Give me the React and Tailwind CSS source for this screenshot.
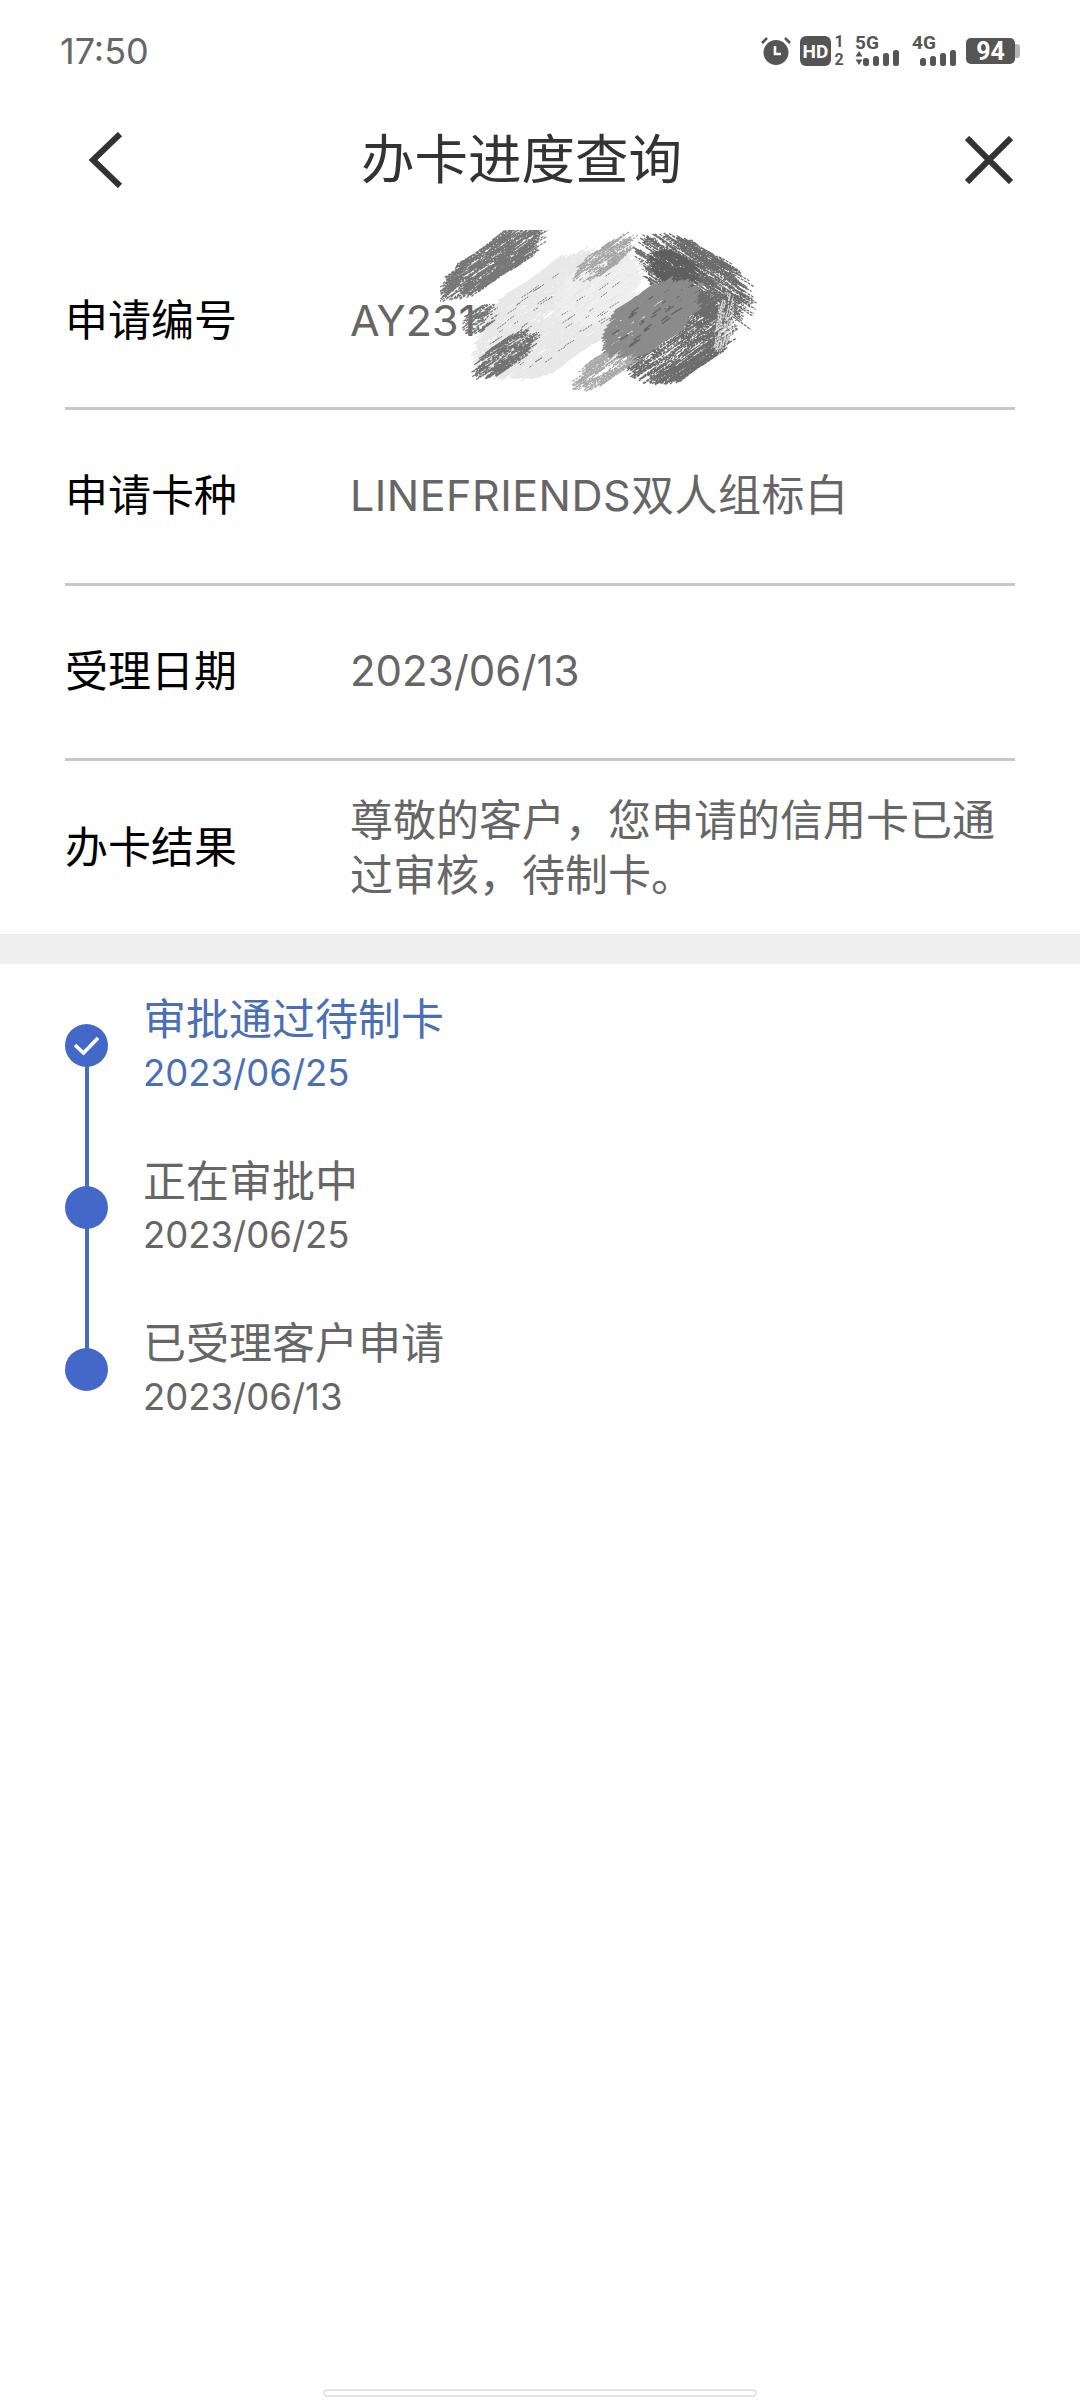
const cjk = "font-['Inter','Noto_Sans_CJK_SC',sans-serif]"

const rows = [
  { label: '申请编号', value: 'AY231', size: 'text-[43px]' },
  { label: '申请卡种', value: 'LINEFRIENDS双人组标白', size: 'text-[43px] tracking-[0.5px]' },
  { label: '受理日期', value: '2023/06/13', size: 'text-[42px]' },
]

const steps = [
  { title: '审批通过待制卡', date: '2023/06/25', active: true },
  { title: '正在审批中', date: '2023/06/25' },
  { title: '已受理客户申请', date: '2023/06/13' },
]

// seeded so the scribble comes out the same on every load
function scribblePaths(seed, patches) {
  let s = seed
  const rnd = () => {
    s = (s * 16807) % 2147483647
    return s / 2147483647
  }
  return patches.map(([cx, cy, len, wide, angle, count, color, width, maxLen, dash], idx) => {
    let d = ''
    for (let i = 0; i < count; i++) {
      const a = (rnd() - 0.5) * 2 * wide
      const b = (rnd() - 0.5) * 2 * len * (1 - ((a * a) / (wide * wide)) * 0.6)
      const t = angle + (rnd() - 0.5) * 0.14
      const dx = Math.cos(t)
      const dy = -Math.sin(t)
      const l = 3 + rnd() * maxLen
      const x = cx + a * -dy + b * dx
      const y = cy + a * dx + b * dy
      d += `M${x.toFixed(1)} ${y.toFixed(1)}L${(x + l * dx).toFixed(1)} ${(y + l * dy).toFixed(1)}`
    }
    return <path key={idx} d={d} fill="none" stroke={color} strokeWidth={width} strokeDasharray={dash} />
  })
}

const UP = 0.6
const DOWN = -0.56

const scribble = scribblePaths(4711, [
  // right dark mass first, the mid grey goes over it
  [248, 44, 62, 30, DOWN, 800, '#6c6c6c', 1.2, 22, '3 1'],
  [232, 38, 26, 15, DOWN, 320, '#5e5e5e', 1.5, 12, '4 1'],
  [236, 112, 58, 34, UP, 1100, '#6d6d6d', 1.2, 20, '3 1'],
  [284, 95, 32, 8, 1.4, 120, '#dddddd', 1, 6, '2 1'],
  // light centre
  [112, 88, 92, 44, UP, 3800, '#e8e8e8', 1.3, 14, '5 1'],
  [155, 62, 48, 28, UP, 700, '#efefef', 1.3, 10, '5 1'],
  [112, 88, 80, 34, UP, 60, '#7a7a7a', 1, 9, '2 1'],
  // left dark band and the lower left leftovers
  [46, 36, 60, 17, UP, 760, '#777777', 1.2, 18, '3 1'],
  [36, 92, 18, 11, UP, 110, '#777777', 1.2, 10, '3 1'],
  [60, 128, 36, 13, UP, 280, '#737373', 1.2, 14, '3 1'],
  // mid greys
  [160, 32, 34, 11, UP, 180, '#a6a6a6', 1.2, 14, '3 1'],
  [166, 136, 42, 13, UP, 280, '#a9a9a9', 1.2, 14, '3 1'],
  [206, 92, 54, 26, UP, 1300, '#8b8b8b', 1.6, 14],
  [206, 92, 40, 18, UP, 24, '#666666', 1.4, 8],
])

function Scribble() {
  return (
    <svg className="absolute left-[440px] top-[230px] h-[165px] w-[340px]" viewBox="0 0 340 165">
      {scribble}
    </svg>
  )
}

function Bars() {
  return (
    <svg width="36" height="16" viewBox="0 0 36 16" fill="#555555">
      <rect x="0" y="8" width="6" height="8" rx="2.5" />
      <rect x="10" y="6" width="6" height="10" rx="2.5" />
      <rect x="20" y="3" width="6" height="13" rx="2.5" />
      <rect x="30" y="0" width="6" height="16" rx="2.5" />
    </svg>
  )
}

function StatusIcons() {
  return (
    <div className="flex items-center font-['Roboto',sans-serif] font-bold text-[#555555]">
      <svg width="30" height="30" viewBox="0 0 30 30" className="mr-[9px]">
        <circle cx="15" cy="16.5" r="12.5" fill="#555555" />
        <path d="M14 10v8h6" fill="none" stroke="#fff" strokeWidth="2.6" />
        <path d="M1 7l5-5M29 7l-5-5" stroke="#555555" strokeWidth="2.6" />
      </svg>
      <div className="flex h-[30px] w-[31px] items-center justify-center rounded-[6px] bg-[#555555] text-[19px] leading-none text-white">
        HD
      </div>
      <div className="ml-[2px] flex w-[12px] flex-col items-center text-[16px] leading-[18.5px]">
        <span>1</span>
        <span>2</span>
      </div>
      <div className="ml-[10px] flex w-[44px] flex-col">
        <span className="text-[19px] leading-[14px]">5G</span>
        <div className="flex items-end justify-between">
          <svg width="8" height="16" viewBox="0 0 8 16" fill="#555555">
            <path d="M4 1l3.5 5.5h-7zM4 15L.5 9.5h7z" />
          </svg>
          <Bars />
        </div>
      </div>
      <div className="ml-[13px] flex w-[44px] flex-col">
        <span className="text-[19px] leading-[14px]">4G</span>
        <div className="flex justify-end">
          <Bars />
        </div>
      </div>
      <div className="ml-[10px] flex items-center">
        <div className="flex h-[26px] w-[49px] items-center justify-center rounded-[5px] bg-[#555555] text-[25px] leading-none text-white">
          94
        </div>
        <div className="h-[14px] w-[5px] rounded-r-[3px] bg-[#b5b5b5]" />
      </div>
    </div>
  )
}

export default function App() {
  return (
    <div className={`relative flex h-[2400px] w-[1080px] flex-col overflow-hidden bg-white ${cjk}`}>
      <div className="flex h-[100px] items-center justify-between px-[60px] pt-[2px]">
        <span className="text-[36px] text-[#666666]">17:50</span>
        <StatusIcons />
      </div>

      <div className="flex h-[120px] items-center justify-between pl-[88px] pr-[67px]">
        <svg width="36" height="56" viewBox="0 0 36 56" fill="none" stroke="#333333" strokeWidth="6">
          <path d="M32 2L5 28l27 26" />
        </svg>
        <h1 className="mr-[46px] text-[53.5px] font-normal leading-none text-[#333333]">办卡进度查询</h1>
        <svg width="48" height="48" viewBox="0 0 48 48" fill="none" stroke="#333333" strokeWidth="6">
          <path d="M2 2l44 44M46 2L2 46" />
        </svg>
      </div>

      <div className="mx-[65px] mt-[14.5px]">
        {rows.map((row) => (
          <div key={row.label} className="flex h-[175.5px] items-center border-b-[3px] border-[#c8c8c8] pb-[2px]">
            <span className="w-[285px] text-[43px] text-black">{row.label}</span>
            <span className={`${row.size} text-[#666666]`}>{row.value}</span>
          </div>
        ))}
        <div className="flex h-[173px] items-center">
          <span className="w-[285px] shrink-0 text-[43px] text-black">办卡结果</span>
          <span className="text-[43px] leading-[55px] text-[#666666]">尊敬的客户，您申请的信用卡已通过审核，待制卡。</span>
        </div>
      </div>

      <div className="h-[30px] bg-[#eeeeee]" />

      <div className="pl-[65px]">
        {steps.map((step, i) => (
          <div key={step.title} className="flex h-[162px] items-center">
            <div className="relative h-[43px] w-[43px]">
              {i < steps.length - 1 && (
                <div className="absolute left-[19.5px] top-[21px] h-[162px] w-[4px] bg-[#4a6cb3]" />
              )}
              <div className="absolute inset-0 flex items-center justify-center rounded-full bg-[#4468c8]">
                {step.active && (
                  <svg width="27" height="21" viewBox="0 0 27 21" fill="none" stroke="#ffffff" strokeWidth="3.6">
                    <path d="M2 10l8.5 8L25 3" />
                  </svg>
                )}
              </div>
            </div>
            <div className="ml-[35px] mt-[2px]">
              <div className={`text-[43px] leading-[54px] ${step.active ? 'text-[#4a6fb5]' : 'text-[#666666]'}`}>
                {step.title}
              </div>
              <div className={`text-[36.5px] leading-[54px] ${step.active ? 'text-[#4a6fb5]' : 'text-[#666666]'}`}>
                {step.date}
              </div>
            </div>
          </div>
        ))}
      </div>

      <div className="mx-auto mb-[3px] mt-auto h-[8px] w-[434px] rounded-full border-2 border-[#e4e4e4] bg-white" />

      <Scribble />
    </div>
  )
}
